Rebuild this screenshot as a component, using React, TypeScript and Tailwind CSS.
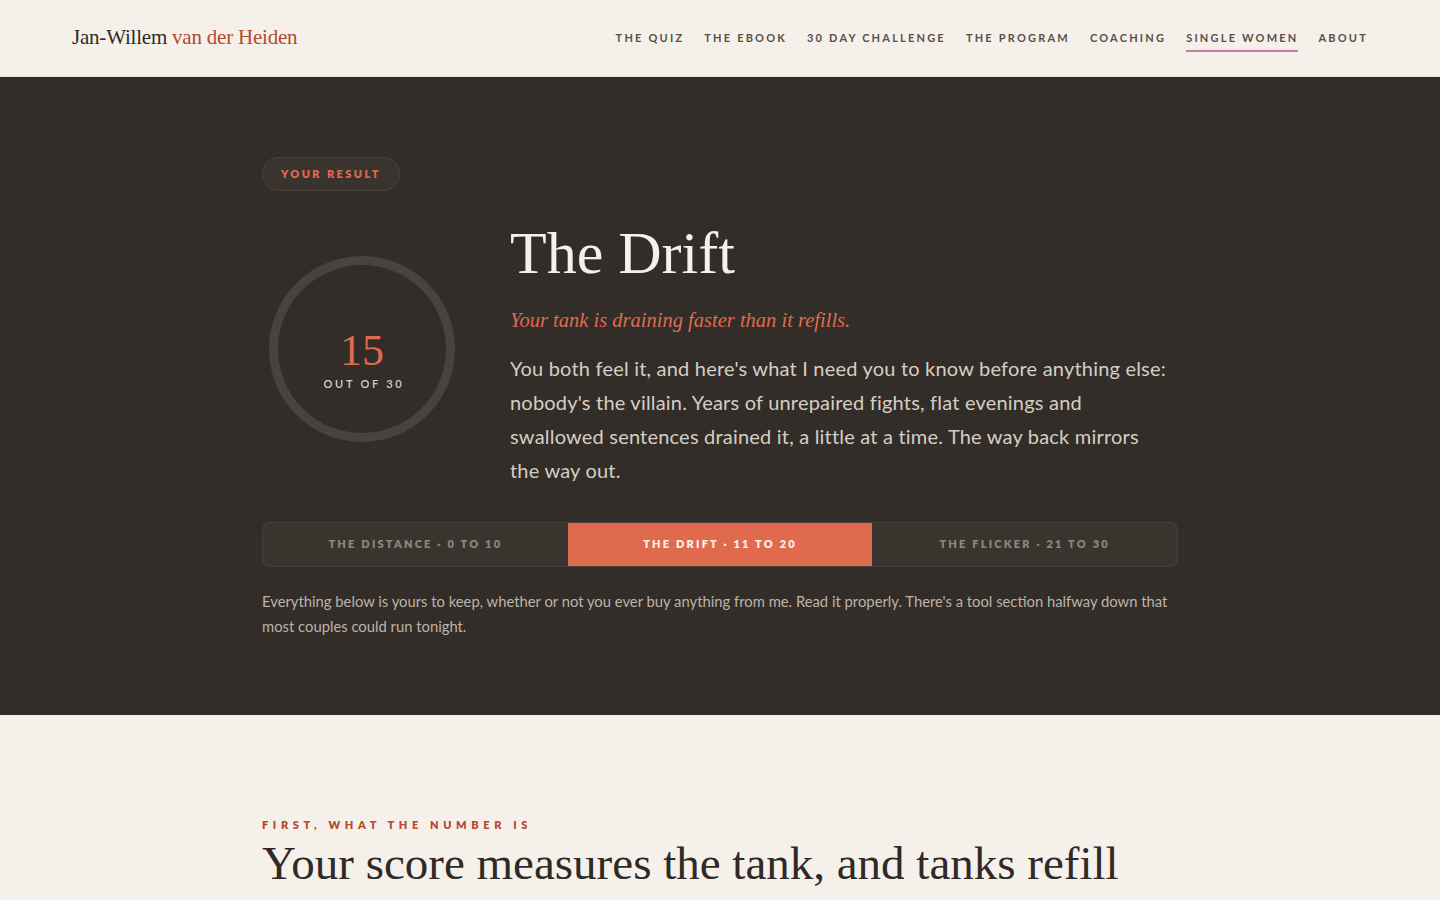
import { ReactNode } from 'react';

const navItems = ['The Quiz', 'The Ebook', '30 Day Challenge', 'The Program', 'Coaching', 'Single Women', 'About'];

const bands = [
  { label: 'The Distance · 0 to 10', active: false },
  { label: 'The Drift · 11 to 20', active: true },
  { label: 'The Flicker · 21 to 30', active: false },
];

const serif = "font-['Liberation_Serif','DejaVu_Serif',serif]";
const sans = "font-['Lato','Liberation_Sans',sans-serif]";

function Header() {
  return (
    <header className="flex h-[77px] items-center justify-between border-b border-[#e8e1d6] bg-[#f5f1ea] px-[72px]">
      <a className={`${serif} text-[21px] tracking-[-0.01em] text-[#2f2a26]`}>
        Jan-Willem <span className="text-[#b54a2f]">van der Heiden</span>
      </a>
      <nav className={`${sans} flex items-center gap-[20px] text-[11px] font-bold uppercase tracking-[0.2em] text-[#56504a]`}>
        {navItems.map((item) => (
          <a
            key={item}
            className={
              item === 'Single Women'
                ? 'border-b-2 border-[#c57aa0] pb-[3px] pt-[6px]'
                : 'pb-[5px] pt-[6px]'
            }
          >
            {item}
          </a>
        ))}
      </nav>
    </header>
  );
}

function ScoreRing({ score, total }: { score: number; total: number }) {
  return (
    <div className="relative flex h-[186px] w-[186px] items-center justify-center">
      <svg className="absolute inset-0" width="186" height="186" viewBox="0 0 186 186">
        <circle cx="93" cy="93" r="88.5" fill="none" stroke="#4a433d" strokeWidth="9" />
      </svg>
      <div className="flex flex-col items-center pt-[21px]">
        <span className={`${serif} text-[44px] leading-[44px] text-[#e06a4e]`}>{score}</span>
        <span className={`${sans} mt-[4px] pl-[4px] text-[11px] font-semibold uppercase leading-[14px] tracking-[0.25em] text-[#d8cfc4]`}>
          out of {total}
        </span>
      </div>
    </div>
  );
}

function Eyebrow({ children }: { children: ReactNode }) {
  return (
    <p className={`${sans} text-[11px] font-extrabold uppercase tracking-[0.42em] text-[#b54a2f]`}>{children}</p>
  );
}

export default function App() {
  return (
    <div className="min-h-screen bg-[#f5f1ea]">
      <Header />

      <section className="bg-[#322d29] pb-[76px] pt-[80px]">
        <div className="mx-auto w-[916px]">
          <span
            className={`${sans} inline-flex h-[34px] items-center rounded-full border border-[#4a433d] bg-[#3a342f] px-[18px] text-[11px] font-extrabold uppercase tracking-[0.22em] text-[#e06a4e]`}
          >
            Your result
          </span>

          <div className="mt-[30px] flex gap-[56px]">
            <div className="w-[192px] shrink-0 pl-[7px] pt-[35px]">
              <ScoreRing score={15} total={30} />
            </div>
            <div className="flex-1">
              <h1 className={`${serif} text-[60px] leading-[64px] text-[#f5f1ea]`}>The Drift</h1>
              <p className={`${serif} mt-[20px] text-[20.5px] italic text-[#e06a4e]`}>
                Your tank is draining faster than it refills.
              </p>
              <p className={`${sans} mt-[15px] max-w-[660px] text-[20px] leading-[34px] tracking-[0.01em] text-[#d6cdc2]`}>
                You both feel it, and here's what I need you to know before anything else: nobody's the villain. Years
                of unrepaired fights, flat evenings and swallowed sentences drained it, a little at a time. The way back
                mirrors the way out.
              </p>
            </div>
          </div>

          <div className="mt-[35px] grid h-[45px] grid-cols-3 overflow-hidden rounded-lg border border-[#48413b] bg-[#3a342f]">
            {bands.map((band) => (
              <div
                key={band.label}
                className={`${sans} flex items-center justify-center text-[11px] font-extrabold uppercase tracking-[0.2em] ${
                  band.active ? 'bg-[#e06a4e] text-[#fbf4ec]' : 'text-[#8f867d]'
                }`}
              >
                {band.label}
              </div>
            ))}
          </div>

          <p className={`${sans} mt-[22px] text-[14.8px] leading-[25px] text-[#bdb3a8]`}>
            Everything below is yours to keep, whether or not you ever buy anything from me. Read it properly. There's a
            tool section halfway down that most couples could run tonight.
          </p>
        </div>
      </section>

      <section className="pb-[60px] pt-[102px]">
        <div className="mx-auto w-[916px]">
          <Eyebrow>First, what the number is</Eyebrow>
          <h2 className={`${serif} mt-[2px] text-[47px] leading-[56px] text-[#2f2a26]`}>
            Your score measures the tank, and tanks refill
          </h2>
        </div>
      </section>
    </div>
  );
}
